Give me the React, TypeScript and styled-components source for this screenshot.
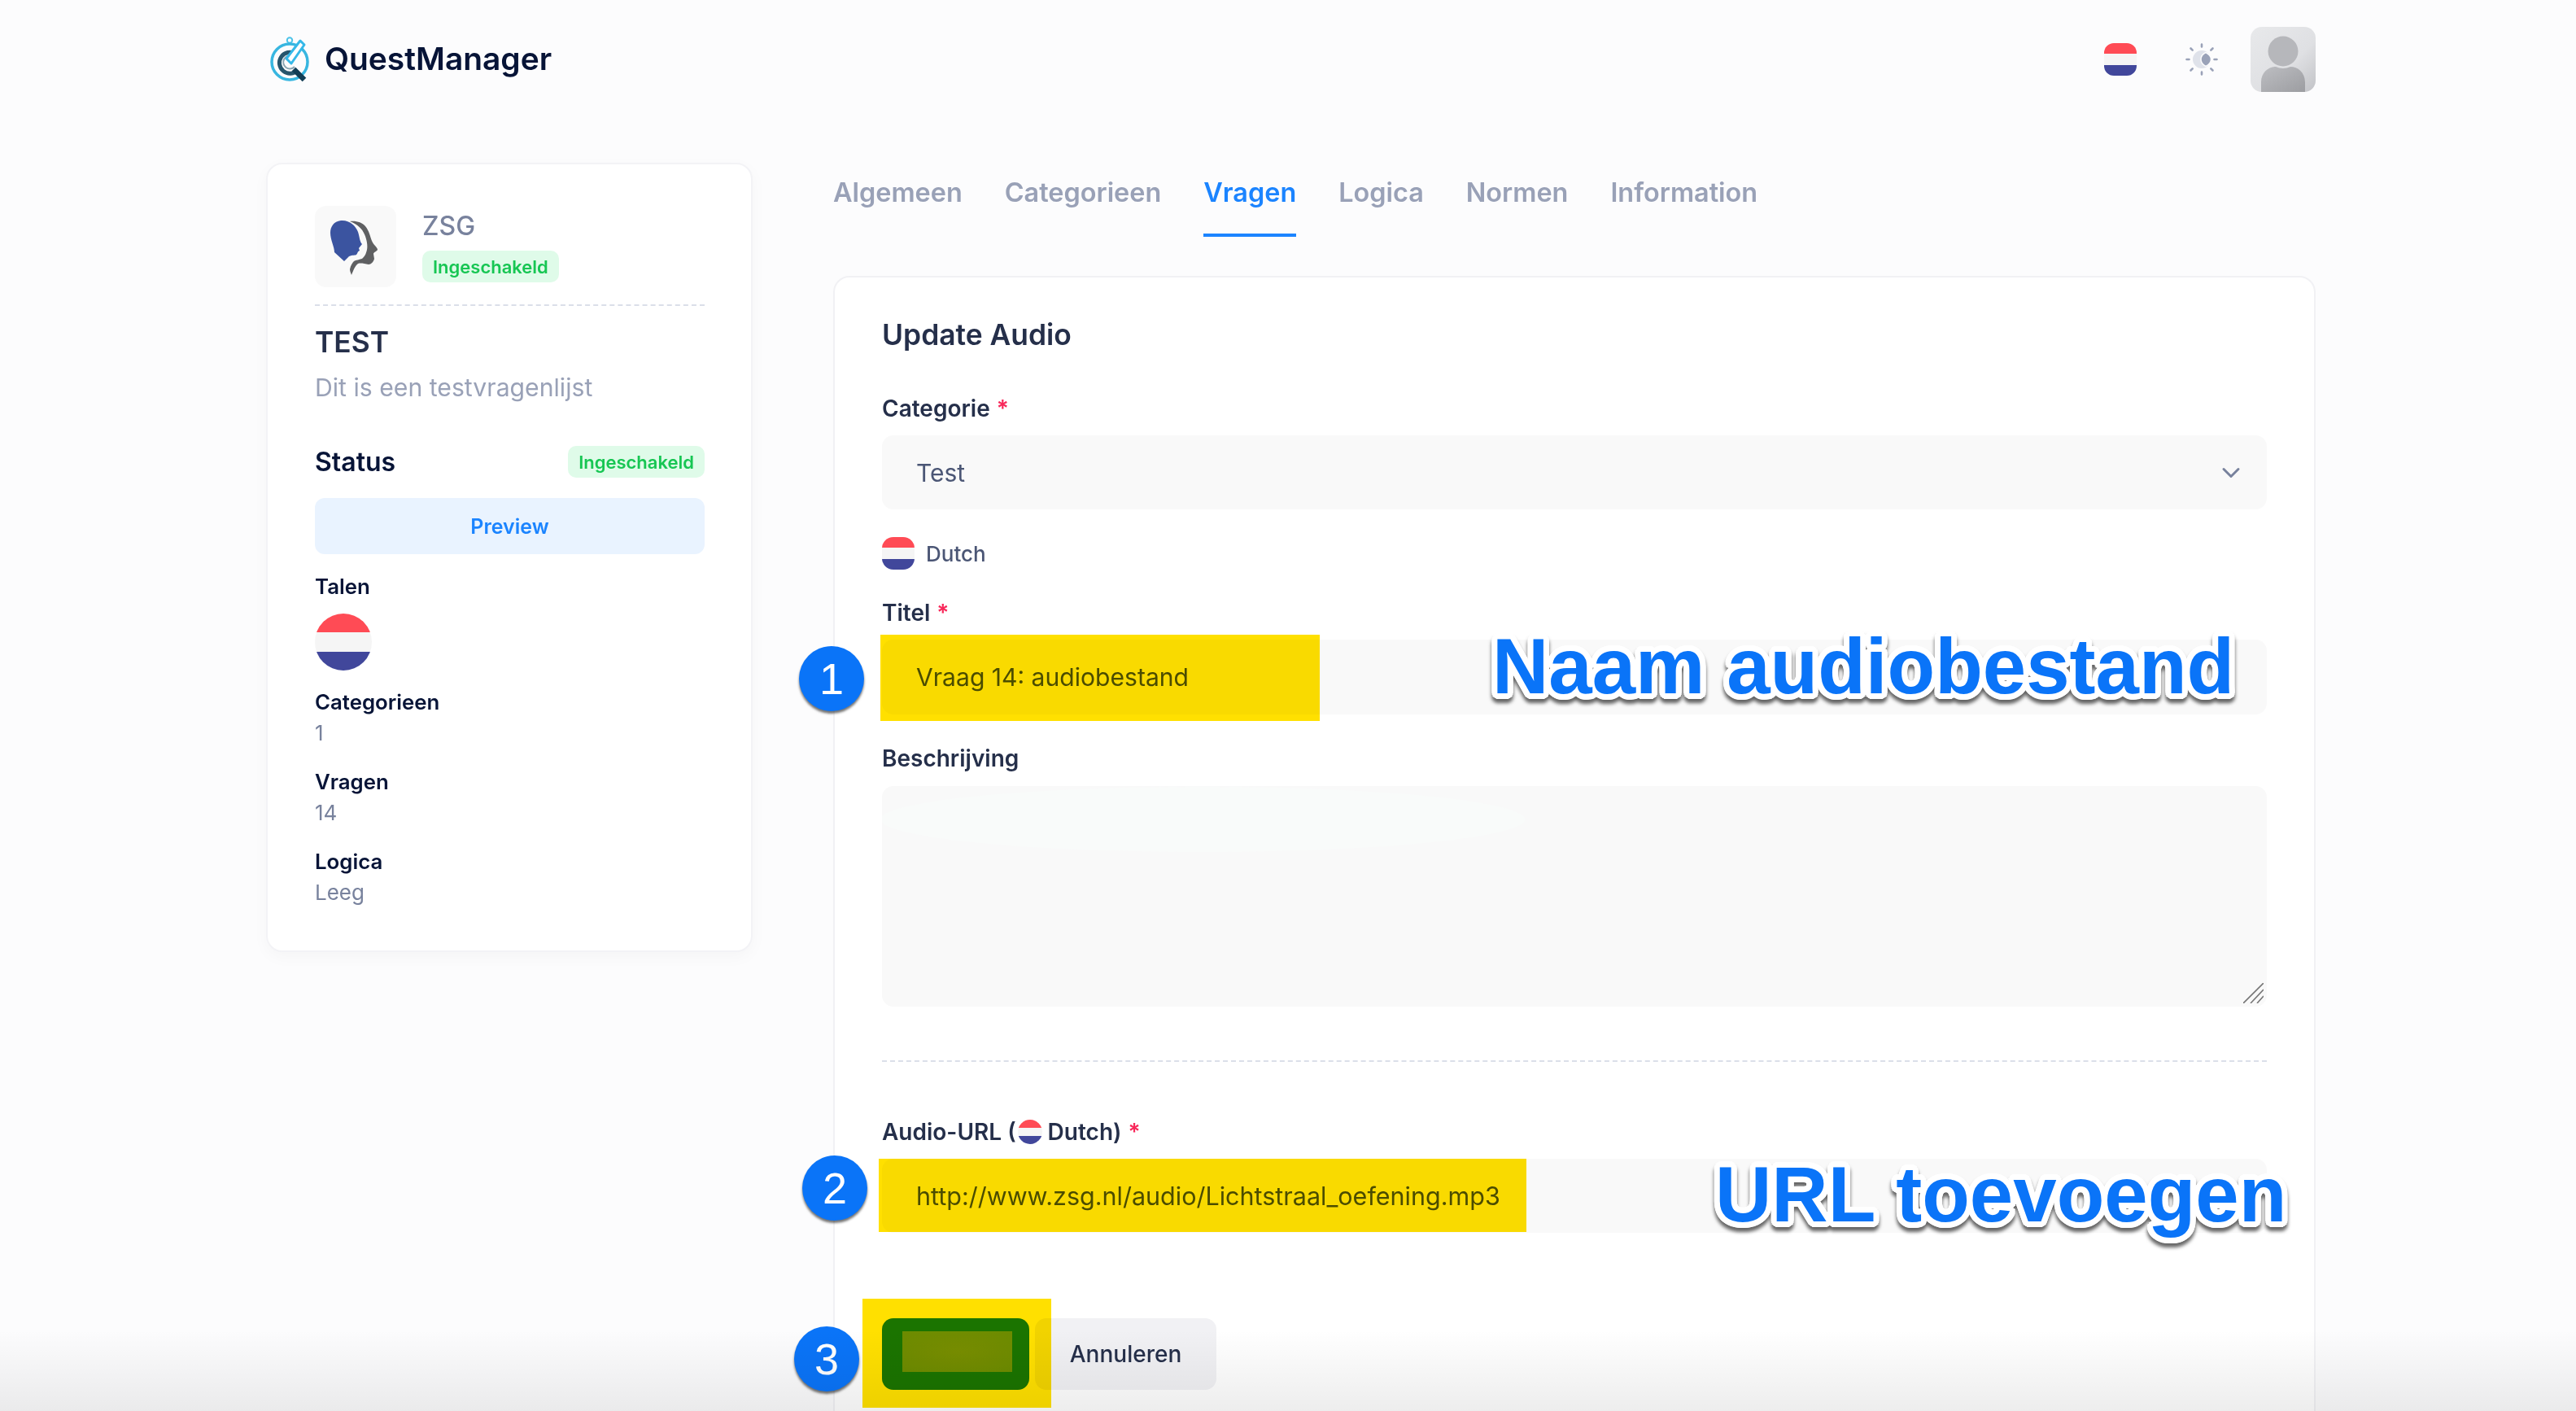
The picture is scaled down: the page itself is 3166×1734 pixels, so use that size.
import React from 'react';
import styled, { createGlobalStyle } from 'styled-components';
import { ChevronDown } from 'lucide-react';

const GlobalStyle = createGlobalStyle`
  html, body {
    margin: 0;
    padding: 0;
    background: #fcfcfd;
    font-family: 'Inter', 'Liberation Sans', sans-serif;
  }
`;

const Page = styled.div`
  position: relative;
  width: 3166px;
  height: 1734px;
  overflow: hidden;
  background: #fcfcfd;
  box-sizing: border-box;
  padding-left: 327px;
`;

const Container = styled.div`
  width: 2519px;
`;

const Header = styled.header`
  height: 146px;
  margin-bottom: 54px;
  display: flex;
  align-items: center;
  justify-content: space-between;
`;

const Brand = styled.div`
  display: flex;
  align-items: center;
  gap: 17px;
  padding-left: 5px;
  font-size: 38.9px;
  line-height: 44px;
  font-weight: 600;
  color: #071437;
`;

const BrandName = styled.span`
  margin-top: -2px;
`;

const HeaderTools = styled.div`
  display: flex;
  align-items: center;
`;

const ThemeIcon = styled.svg`
  width: 40px;
  height: 40px;
  margin: 0 40px 0 60px;
`;

const Avatar = styled.div`
  width: 80px;
  height: 80px;
  border-radius: 14px;
  overflow: hidden;
  svg { display: block; }
`;

const Flag = styled.div<{ $size: number; $radius: string }>`
  width: ${p => p.$size}px;
  height: ${p => p.$size}px;
  border-radius: ${p => p.$radius};
  flex: none;
  background: linear-gradient(
    #ff4b55 0 33.3%,
    #f5f5f5 33.3% 66.6%,
    #41479b 66.6% 100%
  );
`;

const Main = styled.main`
  display: flex;
  align-items: flex-start;
  gap: 99px;
`;

const Sidebar = styled.aside`
  width: 598px;
  box-sizing: border-box;
  padding: 51px 57px 53px 58px;
  background: #fff;
  border: 2px solid #f3f3f6;
  border-radius: 20px;
  box-shadow: 0 6px 20px rgba(0, 0, 0, 0.03);
`;

const OrgRow = styled.div`
  display: flex;
  gap: 32px;
  padding-bottom: 21px;
  border-bottom: 2px dashed #dbdfe9;
`;

const OrgLogo = styled.div`
  width: 100px;
  height: 100px;
  border-radius: 14px;
  background: #f9f9f9;
  svg { display: block; }
`;

const OrgName = styled.div`
  margin-top: 5px;
  font-size: 32px;
  line-height: 40px;
  font-weight: 500;
  color: #78829d;
`;

const Badge = styled.span`
  display: inline-flex;
  align-items: center;
  height: 39px;
  padding: 0 13px;
  border-radius: 10px;
  background: #dffbe9;
  color: #17c653;
  font-size: 22px;
  font-weight: 600;
`;

const OrgBadge = styled(Badge)`
  margin-top: 10px;
`;

const SurveyTitle = styled.div`
  margin-top: 23px;
  font-size: 35.3px;
  line-height: 44px;
  font-weight: 600;
  color: #252f4a;
`;

const SurveyDesc = styled.div`
  margin-top: 13px;
  font-size: 30.2px;
  line-height: 40px;
  color: #99a1b7;
`;

const StatusRow = styled.div`
  margin-top: 52px;
  display: flex;
  align-items: center;
  justify-content: space-between;
  font-size: 32px;
  font-weight: 600;
  color: #071437;
`;

const PreviewButton = styled.div`
  margin: 25px 0 22px;
  height: 69px;
  display: flex;
  align-items: center;
  justify-content: center;
  border-radius: 12px;
  background: #e9f3ff;
  color: #1b84ff;
  font-size: 25px;
  font-weight: 600;
`;

const InfoLabel = styled.div<{ $gap?: number }>`
  margin-top: ${p => p.$gap ?? 0}px;
  font-size: 25.8px;
  line-height: 36px;
  font-weight: 600;
  color: #071437;
`;

const InfoValue = styled.div`
  margin-top: 2px;
  font-size: 26px;
  line-height: 36px;
  color: #78829d;
`;

const LanguageFlag = styled(Flag)`
  margin-top: 15px;
`;

const Content = styled.section`
  flex: 1;
  min-width: 0;
`;

const Tabs = styled.nav`
  height: 91px;
  margin-bottom: 48px;
  display: flex;
  gap: 52px;
`;

const Tab = styled.div<{ $active?: boolean }>`
  height: 91px;
  box-sizing: border-box;
  padding-top: 16px;
  font-size: 32.4px;
  line-height: 42px;
  font-weight: 600;
  color: ${p => (p.$active ? '#1b84ff' : '#99a1b7')};
  border-bottom: 4px solid ${p => (p.$active ? '#1b84ff' : 'transparent')};
`;

const FormCard = styled.div`
  height: 1500px;
  box-sizing: border-box;
  padding: 47px 58px 0;
  background: #fff;
  border: 2px solid #f1f1f4;
  border-radius: 20px;
`;

const FormTitle = styled.h2`
  margin: 0;
  font-size: 35.4px;
  line-height: 48px;
  font-weight: 600;
  color: #252f4a;
`;

const Label = styled.label<{ $gap: number }>`
  display: flex;
  align-items: center;
  margin-top: ${p => p.$gap}px;
  font-size: 28px;
  line-height: 36px;
  font-weight: 600;
  color: #252f4a;
  white-space: pre;
`;

const LabelFlag = styled(Flag)`
  margin: 0 7px 0 2px;
`;

const Required = styled.span`
  color: #f8285a;
  margin-left: 8px;
`;

const SelectBox = styled.div`
  margin-top: 15px;
  height: 91px;
  box-sizing: border-box;
  padding: 0 26px 0 42px;
  display: flex;
  align-items: center;
  justify-content: space-between;
  border-radius: 14px;
  background: #f9f9f9;
  font-size: 30px;
  color: #4b5675;
`;

const LanguageRow = styled.div`
  margin-top: 34px;
  display: flex;
  align-items: center;
  gap: 14px;
  font-size: 26px;
  font-weight: 500;
  color: #4b5675;
`;

const TextInput = styled.input<{ $height: number; $size: number }>`
  display: block;
  width: 100%;
  height: ${p => p.$height}px;
  margin-top: 15px;
  box-sizing: border-box;
  padding: 0 42px;
  border: 0;
  outline: 0;
  border-radius: 14px;
  background: #f9f9f9;
  font-family: inherit;
  font-size: ${p => p.$size}px;
  color: #4b5675;
`;

const TextAreaBox = styled.div`
  position: relative;
  margin-top: 16px;
  height: 271px;
  border-radius: 14px;
  background: #f9f9f9;
  overflow: hidden;
`;

const TextAreaField = styled.textarea`
  display: block;
  width: 100%;
  height: 100%;
  box-sizing: border-box;
  border: 0;
  outline: 0;
  resize: none;
  background: transparent;
`;

const Smudge = styled.div`
  position: absolute;
  left: -2px;
  top: 1px;
  width: 792px;
  height: 80px;
  border-radius: 50%;
  background: #f9fbfa;
  pointer-events: none;
`;

const ResizeGrip = styled.svg`
  position: absolute;
  right: 4px;
  bottom: 4px;
  width: 25px;
  height: 25px;
`;

const Divider = styled.div`
  margin-top: 66px;
  border-top: 2px dashed #dbdfe9;
`;

const Actions = styled.div`
  margin-top: 105px;
  display: flex;
  gap: 7px;
`;

const SaveButton = styled.div`
  width: 181px;
  height: 88px;
  box-sizing: border-box;
  padding: 16px 21px 22px 25px;
  border-radius: 14px;
  background: #1b84ff;
`;

const BlurredCaption = styled.div`
  height: 100%;
  background: radial-gradient(ellipse at center, #78a2c0 0%, #6c9ec0 100%);
`;

const CancelButton = styled.div`
  width: 223px;
  height: 88px;
  display: flex;
  align-items: center;
  justify-content: center;
  border-radius: 14px;
  background: #f1f1f4;
  font-size: 28px;
  font-weight: 500;
  color: #252f4a;
`;

// annotations pasted on top of the screenshot
const Highlight = styled.div<{ $x: number; $y: number; $w: number; $h: number }>`
  position: absolute;
  left: ${p => p.$x}px;
  top: ${p => p.$y}px;
  width: ${p => p.$w}px;
  height: ${p => p.$h}px;
  background: #ffe000;
  mix-blend-mode: multiply;
`;

const StepBadge = styled.div<{ $x: number; $y: number }>`
  position: absolute;
  left: ${p => p.$x}px;
  top: ${p => p.$y}px;
  width: 80px;
  height: 80px;
  display: flex;
  align-items: center;
  justify-content: center;
  border-radius: 50%;
  background: #0a74f8;
  box-shadow: 0 3px 3px rgba(0, 0, 0, 0.55);
  font-family: 'Liberation Sans', Arial, sans-serif;
  font-size: 54px;
  color: #fff;
`;

const outline = Array.from({ length: 24 }, (_, i) => {
  const a = (i / 24) * Math.PI * 2;
  return `${(Math.cos(a) * 7).toFixed(1)}px ${(Math.sin(a) * 7).toFixed(1)}px 0 #fff`;
}).join(', ');

const Callout = styled.div<{ $x: number; $y: number }>`
  position: absolute;
  left: ${p => p.$x}px;
  top: ${p => p.$y}px;
  font-family: 'Liberation Sans', Arial, sans-serif;
  font-size: 96px;
  line-height: 96px;
  font-weight: 700;
  white-space: nowrap;
  color: #0a74f8;
  text-shadow: ${outline};
  filter: drop-shadow(0 5px 2px rgba(0, 0, 0, 0.6));
`;

const BottomFade = styled.div`
  position: absolute;
  left: 0;
  right: 0;
  bottom: 0;
  height: 100px;
  background: linear-gradient(rgba(0, 0, 0, 0), rgba(0, 0, 0, 0.07));
  pointer-events: none;
`;

function QuestLogo() {
  return (
    <svg width="50" height="56" viewBox="0 0 50 56">
      <circle cx="24" cy="4.5" r="3.2" fill="none" stroke="#4cc3e8" strokeWidth="2" />
      <circle cx="24" cy="31" r="22" fill="none" stroke="#38b6e0" strokeWidth="3.5" />
      <path d="M31 21A13 13 0 1 0 34 41" fill="none" stroke="#27556c" strokeWidth="5" />
      <path d="M27 24A8 8 0 1 0 30 37" fill="none" stroke="#8aa5b2" strokeWidth="2" />
      <path d="M20 27l6 6L42 10l-5-5z" fill="#fff" stroke="#35b8e8" strokeWidth="3" strokeLinejoin="round" />
      <path d="M29 40l13 13" stroke="#123d55" strokeWidth="6.5" />
    </svg>
  );
}

function OrgHeads() {
  return (
    <svg width="100" height="100" viewBox="0 0 100 100">
      <path
        d="M43 19C50 18 58 20 62 25C67 31 68 38 70 43C72 48 77 51 77 54C76 56 72 57 72 59L73 65C72 69 69 72 66 72C61 71 56 70 53 71C49 74 47 80 45 85C44 82 43 80 43 78C44 73 46 70 48 68C52 66 57 66 59 64C62 61 63 58 64 54C65 49 64 42 61 35C58 28 53 23 43 19Z"
        fill="#5f6062"
      />
      <path
        d="M32 18C23 19 19 26 19 33C19 42 24 50 24 57L36 68L42 62C46 60 50 61 51 60C53 58 52 56 55 55L54 52L58 47C55 44 55 38 53 32C50 24 42 17 32 18Z"
        fill="#3b54a0"
      />
    </svg>
  );
}

function ThemeToggleIcon() {
  return (
    <ThemeIcon viewBox="0 0 40 40">
      <g stroke="#9aa2b8" strokeWidth="2.6" strokeLinecap="round">
        <path d="M20 1.5v3M20 35.5v3M1.5 20h3M35.5 20h3M6.5 6.5l2.2 2.2M31.3 31.3l2.2 2.2M33.5 6.5l-2.2 2.2M8.7 31.3l-2.2 2.2" />
      </g>
      <circle cx="20" cy="20" r="11" fill="#dfe2ea" />
      <path
        d="M25 11.5C29 13.5 31.5 16.5 31.5 20C31.5 23.5 29 26.5 25 28.5C21 26.5 19 23.5 19 20C19 16.5 21 13.5 25 11.5Z"
        fill="#9aa2b8"
        stroke="#fcfcfd"
        strokeWidth="1.5"
      />
    </ThemeIcon>
  );
}

function AvatarPicture() {
  return (
    <svg width="80" height="80" viewBox="0 0 80 80">
      <defs>
        <linearGradient id="avatarBg" x1="0" y1="0" x2="1" y2="1">
          <stop offset="0" stopColor="#e8e9eb" />
          <stop offset="0.6" stopColor="#dfe0e3" />
          <stop offset="1" stopColor="#c2c3c7" />
        </linearGradient>
        <linearGradient id="avatarBody" x1="0" y1="0" x2="1" y2="1">
          <stop offset="0" stopColor="#bdbec2" />
          <stop offset="1" stopColor="#9c9da1" />
        </linearGradient>
      </defs>
      <rect width="80" height="80" fill="url(#avatarBg)" />
      <circle cx="40" cy="30" r="18.5" fill="#b6b7bb" />
      <path d="M13 80V68C13 56 22 49 31 49Q40 53 49 49C58 49 67 56 67 68V80Z" fill="url(#avatarBody)" />
    </svg>
  );
}

function App() {
  return (
    <Page>
      <GlobalStyle />
      <Container>
        <Header>
          <Brand>
            <QuestLogo />
            <BrandName>QuestManager</BrandName>
          </Brand>
          <HeaderTools>
            <Flag $size={40} $radius="12px" />
            <ThemeToggleIcon />
            <Avatar>
              <AvatarPicture />
            </Avatar>
          </HeaderTools>
        </Header>

        <Main>
          <Sidebar>
            <OrgRow>
              <OrgLogo>
                <OrgHeads />
              </OrgLogo>
              <div>
                <OrgName>ZSG</OrgName>
                <OrgBadge>Ingeschakeld</OrgBadge>
              </div>
            </OrgRow>
            <SurveyTitle>TEST</SurveyTitle>
            <SurveyDesc>Dit is een testvragenlijst</SurveyDesc>
            <StatusRow>
              Status
              <Badge>Ingeschakeld</Badge>
            </StatusRow>
            <PreviewButton>Preview</PreviewButton>
            <InfoLabel>Talen</InfoLabel>
            <LanguageFlag $size={70} $radius="50%" />
            <InfoLabel $gap={21}>Categorieen</InfoLabel>
            <InfoValue>1</InfoValue>
            <InfoLabel $gap={24}>Vragen</InfoLabel>
            <InfoValue>14</InfoValue>
            <InfoLabel $gap={24}>Logica</InfoLabel>
            <InfoValue>Leeg</InfoValue>
          </Sidebar>

          <Content>
            <Tabs>
              <Tab>Algemeen</Tab>
              <Tab>Categorieen</Tab>
              <Tab $active>Vragen</Tab>
              <Tab>Logica</Tab>
              <Tab>Normen</Tab>
              <Tab>Information</Tab>
            </Tabs>

            <FormCard>
              <FormTitle>Update Audio</FormTitle>

              <Label $gap={48}>
                Categorie<Required>*</Required>
              </Label>
              <SelectBox>
                Test
                <ChevronDown size={36} color="#78829d" strokeWidth={2} />
              </SelectBox>

              <LanguageRow>
                <Flag $size={40} $radius="14px" />
                Dutch
              </LanguageRow>

              <Label $gap={35}>
                Titel<Required>*</Required>
              </Label>
              <TextInput $height={92} $size={30.1} readOnly value="Vraag 14: audiobestand" />

              <Label $gap={36}>Beschrijving</Label>
              <TextAreaBox>
                <TextAreaField readOnly />
                <Smudge />
                <ResizeGrip viewBox="0 0 25 25">
                  <path d="M0 25L25 0M9 25L25 8M17 25L25 16" stroke="#777" strokeWidth="1.6" />
                </ResizeGrip>
              </TextAreaBox>

              <Divider />

              <Label $gap={68}>
                Audio-URL (
                <LabelFlag $size={30} $radius="50%" />
                Dutch)<Required>*</Required>
              </Label>
              <TextInput $height={91} $size={30.5} readOnly value="http://www.zsg.nl/audio/Lichtstraal_oefening.mp3" />

              <Actions>
                <SaveButton>
                  <BlurredCaption />
                </SaveButton>
                <CancelButton>Annuleren</CancelButton>
              </Actions>
            </FormCard>
          </Content>
        </Main>
      </Container>

      <Highlight $x={1082} $y={780} $w={540} $h={106} />
      <Highlight $x={1080} $y={1424} $w={796} $h={90} />
      <Highlight $x={1060} $y={1596} $w={232} $h={134} />

      <StepBadge $x={982} $y={794}>1</StepBadge>
      <StepBadge $x={986} $y={1420}>2</StepBadge>
      <StepBadge $x={976} $y={1630}>3</StepBadge>

      <Callout $x={1834} $y={771}>Naam audiobestand</Callout>
      <Callout $x={2108} $y={1420}>URL toevoegen</Callout>

      <BottomFade />
    </Page>
  );
}

export default App;
